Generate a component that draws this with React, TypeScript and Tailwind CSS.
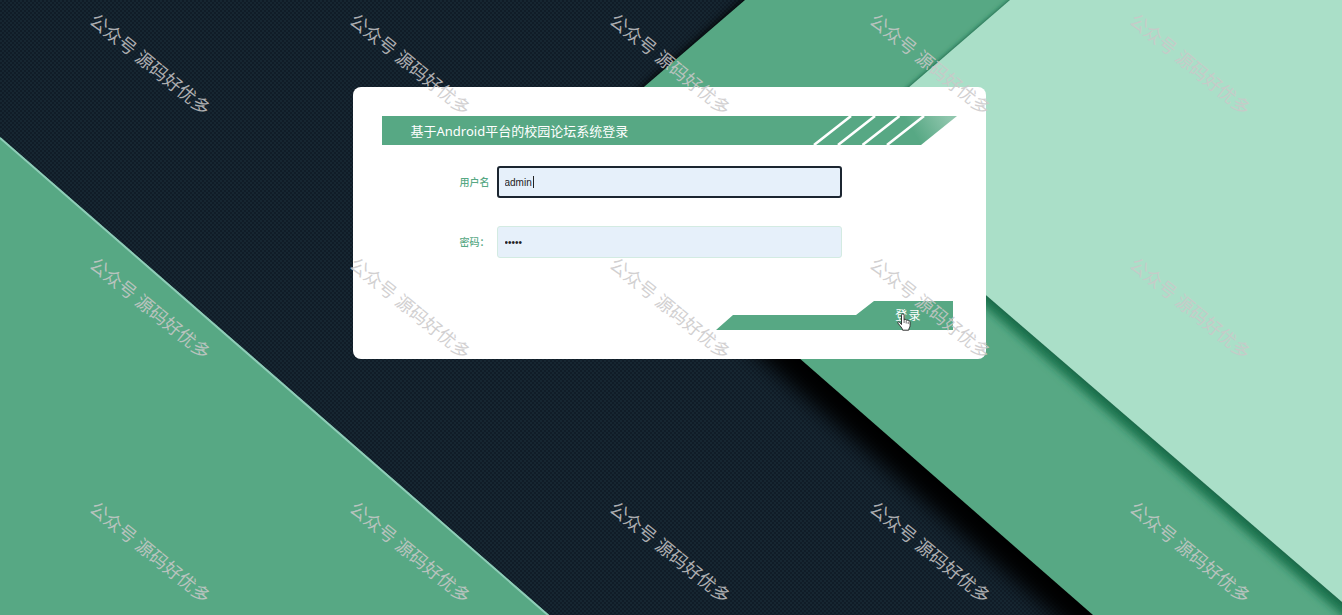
import { useState } from "react";

const WATERMARK = "公众号 源码好优多";

function Backdrop() {
  return (
    <svg
      aria-hidden="true"
      className="absolute inset-0 h-full w-full"
      viewBox="0 0 1342 615"
      preserveAspectRatio="xMidYMid slice"
    >
      <defs>
        <pattern id="weave" width="4" height="4" patternUnits="userSpaceOnUse">
          <rect width="4" height="4" fill="#101c27" />
          <rect width="2" height="2" fill="#162631" />
          <rect x="2" y="2" width="2" height="2" fill="#162631" />
        </pattern>
        <filter id="wide" x="-20%" y="-20%" width="140%" height="140%">
          <feGaussianBlur stdDeviation="10" />
        </filter>
        <filter id="narrow" x="-20%" y="-20%" width="140%" height="140%">
          <feGaussianBlur stdDeviation="4" />
        </filter>
        <filter id="thin" x="-20%" y="-20%" width="140%" height="140%">
          <feGaussianBlur stdDeviation="2" />
        </filter>
        <clipPath id="band">
          <path d="M745 0 566 154 1093 615H1342V0Z" />
        </clipPath>
      </defs>
      <rect width="1342" height="615" fill="url(#weave)" />
      <path d="M0 137 549 615H0Z" fill="#57a884" />
      <path d="M0 138 549 616" stroke="#8fcdb8" strokeWidth="2" />
      <path d="M775 -20 560 182 1097 652 1200 653V300Z" fill="#000205" filter="url(#wide)" />
      <path d="M768 -20 566 154 1116 640 1200 600V300Z" fill="#000205" filter="url(#narrow)" />
      <path d="M745 0 566 154 1093 615H1342V0Z" fill="#57a884" />
      <g clipPath="url(#band)">
        <path d="M1040 -20 840 152 817 162 1388 655V0Z" fill="#1f7550" filter="url(#narrow)" />
        <path d="M1033 -20 826 158 1388 643V0Z" fill="#1f6447" filter="url(#thin)" />
      </g>
      <path d="M1010 0 827 158 1342 602V0Z" fill="#aadfc8" />
    </svg>
  );
}

function Watermarks() {
  return (
    <div
      aria-hidden="true"
      className="pointer-events-none absolute inset-0 z-20 overflow-hidden"
    >
      <div className="-mt-[58px] ml-5 grid auto-rows-[244px] grid-cols-[repeat(5,260px)]">
        {Array.from({ length: 15 }, (_, i) => (
          <div key={i} className="flex items-center justify-center">
            <span className="rotate-[39deg] text-lg whitespace-nowrap text-[#cac8c9]/85">
              {WATERMARK}
            </span>
          </div>
        ))}
      </div>
    </div>
  );
}

function TitleBar() {
  return (
    <div className="relative flex h-[29px] items-center pl-[29px]">
      <svg
        aria-hidden="true"
        className="absolute inset-0 h-full w-full"
        viewBox="0 0 575 29"
        preserveAspectRatio="none"
      >
        <defs>
          <linearGradient id="fade" gradientUnits="userSpaceOnUse" x1="534" y1="20" x2="566" y2="0">
            <stop offset="0" stopColor="#57a884" />
            <stop offset="1" stopColor="#8fc6ad" />
          </linearGradient>
        </defs>
        <path d="M0 0H575L539 29H0Z" fill="url(#fade)" />
        <path
          d="M469 0 432 29M493 0 456 29M517.500 0 480.500 29M542 0 505 29"
          stroke="#fff"
          strokeWidth="2.600"
        />
      </svg>
      <h1 className="relative text-[13px] leading-5 text-white">
        基于Android平台的校园论坛系统登录
      </h1>
    </div>
  );
}

function Pointer() {
  return (
    <svg
      aria-hidden="true"
      className="pointer-events-none absolute top-3 left-[181px] h-[18px] w-[14px]"
      viewBox="0 0 14 18"
    >
      <path
        d="M4.500 11.500V2.200a1.300 1.300 0 0 1 2.600 0V7c.5-.9 2-.7 2.100.4.600-.7 1.900-.5 2 .6.700-.5 1.900-.2 1.900 1v3.500c0 2-1.300 2.600-1.400 4.700H5.600C5.400 15 3 13 1.100 10.300.3 9 1.600 8.200 2.600 9.200Z"
        fill="#fff"
        stroke="#333"
        strokeWidth="1"
        strokeLinejoin="round"
      />
      <path d="M7.100 7v3M9.200 8v2.500M11.200 9v2" stroke="#444" strokeWidth=".8" />
    </svg>
  );
}

export default function App() {
  const [user, setUser] = useState("admin");
  const [password, setPassword] = useState("admin");
  const field =
    "h-8 w-full rounded-[3px] bg-[#e6f0fa] font-['Liberation_Sans','Noto_Sans_CJK_SC',sans-serif] text-[10px] text-[#222] outline-none";
  const label = "w-[37px] text-[10px] leading-4 font-medium text-[#57a884]";

  return (
    <main className="relative min-h-screen overflow-hidden font-['Noto_Sans','Noto_Sans_CJK_SC',sans-serif]">
      <Backdrop />
      <div className="relative z-10 flex justify-center pt-[87px] pr-5 pb-8 pl-4">
        <form
          className="w-full max-w-[633px] rounded-lg bg-white p-[29px]"
          onSubmit={(e) => e.preventDefault()}
        >
          <TitleBar />
          <div className="mt-[21px] flex flex-col gap-7 pr-[115px] pl-[78px]">
            <div className="flex items-center">
              <label htmlFor="user" className={label}>
                用户名
              </label>
              <div className="relative flex-1">
                <input
                  id="user"
                  className={`${field} border-2 border-[#1b2530] px-[6px] caret-transparent`}
                  value={user}
                  onChange={(e) => setUser(e.target.value)}
                />
                {user === "admin" && (
                  <span
                    aria-hidden="true"
                    className="pointer-events-none absolute top-[10px] left-9 h-3 w-px bg-[#222]"
                  />
                )}
              </div>
            </div>
            <div className="flex items-center">
              <label htmlFor="password" className={label}>
                密码：
              </label>
              <div className="flex-1">
                <input
                  id="password"
                  type="password"
                  className={`${field} block border border-[#d3ebe2] px-[7px]`}
                  value={password}
                  onChange={(e) => setPassword(e.target.value)}
                />
              </div>
            </div>
          </div>
          <div className="mt-[43px] flex justify-end pr-1">
            <button
              type="submit"
              className="relative h-[29px] w-[237px] pl-[149px] text-[12px] leading-4 tracking-widest text-white"
            >
              <svg
                aria-hidden="true"
                className="absolute inset-0 h-full w-full"
                viewBox="0 0 237 29"
              >
                <path d="M0 29 17 14H140L158 0H237V29Z" fill="#57a884" />
              </svg>
              <span className="relative">登录</span>
              <Pointer />
            </button>
          </div>
        </form>
      </div>
      <Watermarks />
    </main>
  );
}
